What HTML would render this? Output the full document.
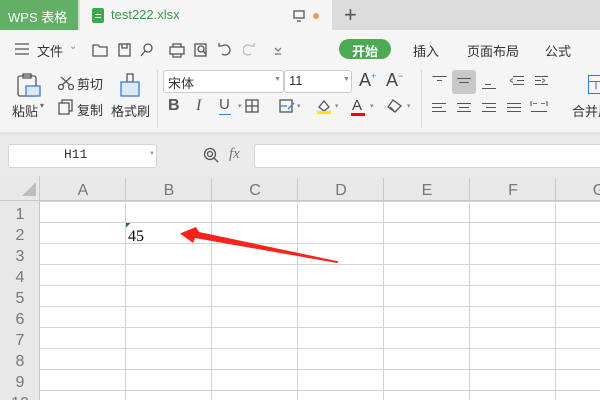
<!DOCTYPE html>
<html><head><meta charset="utf-8"><style>
*{margin:0;padding:0;box-sizing:border-box}
body{width:600px;height:400px;overflow:hidden;background:#fff;font-family:"Liberation Sans","Noto Sans CJK SC",sans-serif;position:relative;color:#333}
.a{position:absolute}
.t{position:absolute;font-size:13px;white-space:nowrap}
.ic{position:absolute;stroke:#555;fill:none;stroke-width:1.3}
</style></head><body>
<!-- tab bar -->
<div class="a" style="left:0;top:0;width:600px;height:30px;background:#dcdcdc"></div>
<div class="a" style="left:0;top:0;width:78px;height:30px;background:#62b066"></div>
<div class="t" style="left:8px;top:7px;color:#fff;font-size:13px">WPS 表格</div>
<div class="a" style="left:80px;top:0;width:252px;height:30px;background:#f5f5f5"></div>
<div class="a" style="left:92px;top:8px;width:12px;height:15px;background:#3fa84c;border-radius:2px"></div>
<div class="a" style="left:95px;top:14px;width:6px;height:1px;background:#fff"></div>
<div class="a" style="left:95px;top:17px;width:6px;height:1px;background:#fff"></div>
<div class="t" style="left:111px;top:7px;color:#3a9a48;font-size:13px">test222.xlsx</div>
<svg class="ic" style="left:293px;top:10px" width="12" height="12"><rect x="1" y="1" width="10" height="7"/><path d="M4 11h4"/></svg>
<div class="a" style="left:313px;top:13px;width:6px;height:6px;border-radius:50%;background:#e89b55"></div>
<div class="t" style="left:344px;top:2px;font-size:22px;color:#555">+</div>
<!-- toolbar -->
<div class="a" style="left:0;top:30px;width:600px;height:102px;background:#f5f5f5"></div>
<svg class="ic" style="left:15px;top:43px" width="14" height="12"><path d="M0 1h14M0 6h14M0 11h14"/></svg>
<div class="t" style="left:37px;top:41px">文件</div>
<div class="t" style="left:69px;top:41px;color:#888;font-size:10px">⌄</div>
<svg class="ic" style="left:92px;top:42px" width="140" height="16"><path d="M1 3h5l2 2h7v9H1z"/><rect x="27" y="2" width="11" height="12"/><path d="M30 2v4h5V2"/><circle cx="56" cy="6" r="4"/><path d="M53 9l-4 5"/><rect x="78" y="5" width="14" height="7"/><path d="M81 5V2h8v3M81 12v3h8v-3"/><rect x="103" y="2" width="11" height="12"/><circle cx="109" cy="7" r="3"/><path d="M111 9l3 3"/><path d="M130 4a5 5 0 1 1 0 8M130 4l-3 0 0-3"/></svg>
<svg class="ic" style="left:243px;top:42px;stroke:#bbb" width="40" height="16"><path d="M8 4a5 5 0 1 0 0 8M8 4h3V1"/><path d="M32 6l3 3 3-3M32 12h6" style="stroke:#777"/></svg>
<div class="a" style="left:339px;top:39px;width:52px;height:20px;border-radius:10px;background:#4caa55"></div>
<div class="t" style="left:352px;top:41px;color:#fff;font-weight:bold">开始</div>
<div class="t" style="left:413px;top:41px">插入</div>
<div class="t" style="left:467px;top:41px">页面布局</div>
<div class="t" style="left:545px;top:41px">公式</div>
<!-- clipboard group -->
<svg class="ic" style="left:16px;top:73px" width="26" height="24"><rect x="2" y="3" width="18" height="20" rx="2"/><rect x="7" y="1" width="8" height="4"/><rect x="10" y="13" width="14" height="10" style="fill:#dde8f5;stroke:#3b7cd4"/></svg>
<div class="t" style="left:12px;top:101px">粘贴</div><div class="t" style="left:40px;top:101px;font-size:8px;color:#666">▾</div>
<svg class="ic" style="left:58px;top:76px" width="16" height="14"><circle cx="3" cy="11" r="2.5"/><circle cx="13" cy="11" r="2.5"/><path d="M4 9L13 1M12 9L3 1"/></svg>
<div class="t" style="left:77px;top:74px">剪切</div>
<svg class="ic" style="left:58px;top:99px" width="16" height="16"><rect x="1" y="4" width="10" height="11"/><path d="M4 4V1h10v11h-3"/></svg>
<div class="t" style="left:77px;top:100px">复制</div>
<svg class="ic" style="left:118px;top:73px" width="24" height="24"><rect x="9" y="1" width="6" height="8"/><rect x="3" y="9" width="18" height="14" style="fill:#dde8f5;stroke:#3b7cd4"/></svg>
<div class="t" style="left:111px;top:101px">格式刷</div>
<div class="a" style="left:157px;top:70px;width:1px;height:58px;background:#ddd"></div>
<!-- font -->
<div class="a" style="left:163px;top:70px;width:121px;height:23px;background:#fff;border:1px solid #ccc;border-radius:3px"></div>
<div class="t" style="left:168px;top:73px">宋体</div><div class="t" style="left:274px;top:76px;font-size:7px;color:#888">▼</div>
<div class="a" style="left:284px;top:70px;width:68px;height:23px;background:#fff;border:1px solid #ccc;border-radius:3px"></div>
<div class="t" style="left:289px;top:73px">11</div><div class="t" style="left:343px;top:76px;font-size:7px;color:#888">▼</div>
<div class="t" style="left:359px;top:70px;font-size:18px;color:#444">A<sup style="font-size:9px;color:#3b7cd4">+</sup></div>
<div class="t" style="left:386px;top:70px;font-size:18px;color:#444">A<sup style="font-size:9px;color:#3b7cd4">−</sup></div>
<div class="t" style="left:168px;top:97px;font-size:16px;font-weight:bold;color:#555">B</div>
<div class="t" style="left:196px;top:97px;font-size:16px;font-style:italic;font-family:'Liberation Serif',serif;color:#555">I</div>
<div class="t" style="left:219px;top:96px;font-size:15px;color:#555">U</div>
<div class="a" style="left:219px;top:114px;width:12px;height:1px;background:#3b7cd4"></div>
<svg class="ic" style="left:245px;top:99px" width="14" height="14"><rect x="1" y="1" width="12" height="12"/><path d="M7 1v12M1 7h12"/></svg>
<svg class="ic" style="left:279px;top:99px" width="16" height="14"><rect x="1" y="1" width="12" height="12"/><path d="M1 7h7M9 10l6-6" style="stroke:#3b7cd4"/></svg>
<svg class="ic" style="left:316px;top:99px" width="16" height="16"><path d="M3 8l5-6 5 6-5 4z"/><rect x="1" y="12" width="14" height="3" style="fill:#ffe800;stroke:none"/></svg>
<div class="t" style="left:352px;top:97px;font-size:15px;color:#444">A</div>
<div class="a" style="left:351px;top:113px;width:14px;height:3px;background:#f00"></div>
<svg class="ic" style="left:387px;top:99px" width="16" height="14"><path d="M6 1l8 6-6 6-7-5z"/><path d="M3 8l4 4"/></svg>
<div class="t" style="left:238px;top:102px;font-size:7px;color:#888">▾ </div>
<div class="t" style="left:297px;top:102px;font-size:7px;color:#888">▾</div>
<div class="t" style="left:335px;top:102px;font-size:7px;color:#888">▾</div>
<div class="t" style="left:370px;top:102px;font-size:7px;color:#888">▾</div>
<div class="t" style="left:407px;top:102px;font-size:7px;color:#888">▾</div>
<div class="a" style="left:421px;top:70px;width:1px;height:58px;background:#ddd"></div>
<!-- align -->
<div class="a" style="left:452px;top:70px;width:24px;height:24px;background:#c8c8c8;border-radius:3px"></div>
<svg class="ic" style="left:0;top:0;stroke-width:1.1" width="600" height="132">
<path d="M432.5 76.5h14M437 80.5h5M457 78.5h14M459 82.5h10M485 84.5h6M482 88.5h14M513 76.5h11M517 80.5h7M513 84.5h11M535 76.5h13M535 80.5h6M535 84.5h13"/>
<path d="M510 80.5l3-2M510 80.5l3 2M545 80.5l-3-2M545 80.5l-3 2" style="stroke:#3b7cd4"/>
<path d="M432 103.5h14M432 107.5h10M432 111.5h14M457 103.5h14M459 107.5h10M457 111.5h14M482 103.5h14M486 107.5h10M482 111.5h14M507 103.5h14M507 107.5h14M507 111.5h14M531 111.5h16M531 101v5M547 101v5"/>
<path d="M533 103.5h4M541 103.5h4" style="stroke:#3b7cd4"/>
<rect x="588.5" y="75.5" width="16" height="18" style="stroke:#3b7cd4"/><path d="M588 81.5h16M596 81.5v8" style="stroke:#3b7cd4"/>
</svg>
<div class="t" style="left:572px;top:101px">合并居中</div>
<!-- formula area -->
<div class="a" style="left:0;top:132px;width:600px;height:70px;background:#ebebeb"></div>
<div class="a" style="left:0;top:132px;width:600px;height:3px;background:#e2e2e2"></div>
<div class="a" style="left:8px;top:144px;width:149px;height:24px;background:#fff;border:1px solid #d4d4d4;border-radius:3px"></div>
<div class="t" style="left:64px;top:147px;font-family:'Liberation Mono',monospace;font-size:13px;color:#333">H11</div>
<div class="t" style="left:149px;top:151px;font-size:6px;color:#999">▼</div>
<svg class="ic" style="left:203px;top:147px" width="16" height="16"><circle cx="7" cy="7" r="5.5"/><circle cx="7" cy="7" r="2.5"/><path d="M11 11l4 4"/></svg>
<div class="t" style="left:229px;top:146px;font-style:italic;font-family:'Liberation Serif',serif;font-size:15px;color:#777">fx</div>
<div class="a" style="left:254px;top:144px;width:350px;height:24px;background:#fff;border:1px solid #d4d4d4;border-radius:3px"></div>
<!-- grid -->
<div class="a" style="left:0;top:176px;width:600px;height:25px;background:#e8e8e8;border-bottom:1px solid #c8c8c8"></div>
<div class="a" style="left:0;top:201px;width:40px;height:199px;background:#e8e8e8"></div>
<svg class="a" style="left:21px;top:181px" width="16" height="16"><path d="M15 1V15H1z" fill="#bdbdbd"/></svg>
<svg class="a" style="left:0;top:176px" width="600" height="224">
<g stroke="#d4d4d4" stroke-width="1">
<path d="M40 25.5H600M40 46.5H600M40 67.5H600M40 88.5H600M40 109.5H600M40 130.5H600M40 151.5H600M40 172.5H600M40 193.5H600M40 214.5H600"/>
<path d="M125.5 25V224M211.5 25V224M297.5 25V224M383.5 25V224M469.5 25V224M555.5 25V224"/>
</g>
<g stroke="#c8c8c8"><path d="M39.5 0V224M125.5 2V25M211.5 2V25M297.5 2V25M383.5 2V25M469.5 2V25M555.5 2V25"/></g>
<g font-family="Liberation Sans,sans-serif" font-size="16" fill="#777" text-anchor="middle">
<text x="83" y="19">A</text><text x="169" y="19">B</text><text x="255" y="19">C</text><text x="341" y="19">D</text><text x="427" y="19">E</text><text x="513" y="19">F</text><text x="599" y="19">G</text>
<text x="20" y="43">1</text><text x="20" y="64">2</text><text x="20" y="85">3</text><text x="20" y="106">4</text><text x="20" y="127">5</text><text x="20" y="148">6</text><text x="20" y="169">7</text><text x="20" y="190">8</text><text x="20" y="211">9</text><text x="20" y="232">10</text>
</g>
<path d="M126 47V51.5H130.5V47z" fill="#fff"/><path d="M126 47h4.5L126 51.5z" fill="#1a7a2a"/>
<text x="128" y="65" font-family="Liberation Serif,serif" font-size="16" fill="#000">45</text>
<path d="M180 57.5L196 51L199 56L339 85.5L337 87L195 62L193 67z" fill="#f8231b"/>
</svg>
</body></html>
